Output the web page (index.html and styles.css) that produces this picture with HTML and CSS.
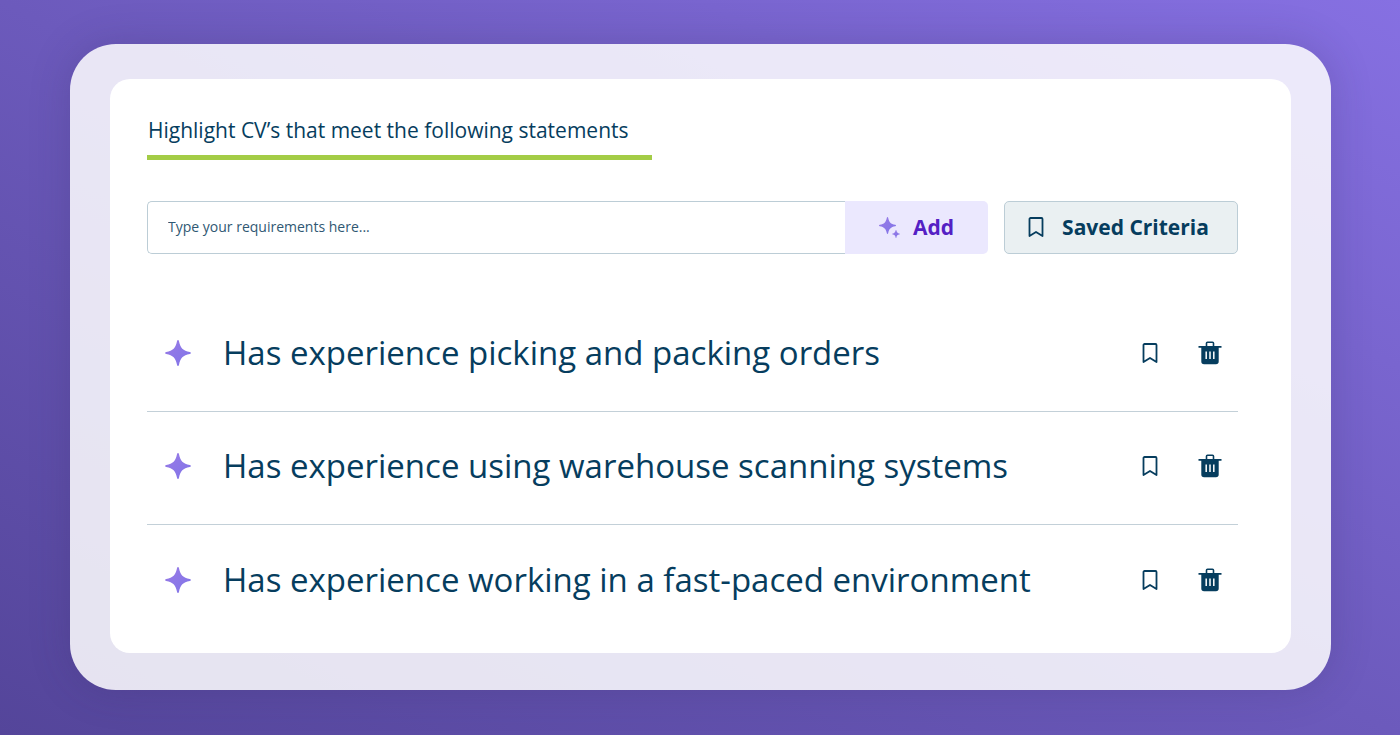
FILE: index.html
```
<!DOCTYPE html>
<html lang="en">
<head>
  <meta charset="UTF-8" />
  <meta name="viewport" content="width=device-width, initial-scale=1.0"/>
  <title>Highlight CVs</title>
  <link rel="stylesheet" href="styles.css">
</head>
<body>
  <!-- shared icons -->
  <svg class="sprite" aria-hidden="true">
    <linearGradient id="violet" x1="0" y1="0" x2="1" y2="1">
      <stop offset="0" stop-color="#9a7be6"/>
      <stop offset="1" stop-color="#7f74e8"/>
    </linearGradient>
    <symbol id="star" viewBox="0 0 26 26">
      <path fill="url(#violet)" d="M13 0c.5 0 .8.4 1 1.200C15.300 8 18 10.700 24.800 12c.8.2 1.200.5 1.200 1s-.4.800-1.200 1C18 15.300 15.300 18 14 24.800c-.2.800-.5 1.200-1 1.200s-.8-.4-1-1.200C10.700 18 8 15.300 1.200 14 .4 13.800 0 13.500 0 13s.4-.8 1.200-1C8 10.700 10.700 8 12 1.200c.2-.8.500-1.200 1-1.200z"/>
    </symbol>
    <symbol id="bookmark" viewBox="0 0 16 20">
      <path fill="none" stroke="currentColor" stroke-width="1.800" stroke-linejoin="round" d="M2.500 1h11a1 1 0 0 1 1 1V19L8 15 1.500 19V2a1 1 0 0 1 1-1z"/>
    </symbol>
    <symbol id="trash" viewBox="0 0 24 24">
      <path fill="none" stroke="currentColor" stroke-width="1.600" d="M8.500 5.500V2.300q0-1 1-1h5q1 0 1 1v3.200"/>
      <path fill="currentColor" d="M.5 5h23v1.800h-2.800V20.500a2.800 2.800 0 0 1-2.800 2.800H6.100a2.800 2.800 0 0 1-2.800-2.800V6.800H.5z"/>
      <path stroke="#fff" stroke-width="1.500" d="M8.200 10.500v7.500M12 10.500v7.500M15.800 10.500v7.500"/>
    </symbol>
  </svg>

  <main class="frame">
    <div class="card">
      <h1 class="title"><label for="requirement">Highlight CV’s that meet the following statements</label></h1>

      <form class="toolbar">
        <div class="entry">
          <input id="requirement" type="text" placeholder="Type your requirements here...">
          <button class="add" type="button">
            <svg class="sparkles" viewBox="0 0 22 22" aria-hidden="true">
              <use href="#star" x="0" y="1" width="17" height="17"/>
              <use href="#star" x="13" y="14" width="8" height="8"/>
            </svg>
            Add
          </button>
        </div>
        <button class="saved" type="button">
          <svg class="bookmark" aria-hidden="true"><use href="#bookmark"/></svg>
          Saved Criteria
        </button>
      </form>

      <ul class="criteria">
        <li>
          <svg class="star" aria-hidden="true"><use href="#star"/></svg>
          <span class="text">Has experience picking and packing orders</span>
          <button class="icon" type="button" aria-label="Save"><svg class="bookmark" aria-hidden="true"><use href="#bookmark"/></svg></button>
          <button class="icon" type="button" aria-label="Delete"><svg class="trash" aria-hidden="true"><use href="#trash"/></svg></button>
        </li>
        <li>
          <svg class="star" aria-hidden="true"><use href="#star"/></svg>
          <span class="text">Has experience using warehouse scanning systems</span>
          <button class="icon" type="button" aria-label="Save"><svg class="bookmark" aria-hidden="true"><use href="#bookmark"/></svg></button>
          <button class="icon" type="button" aria-label="Delete"><svg class="trash" aria-hidden="true"><use href="#trash"/></svg></button>
        </li>
        <li>
          <svg class="star" aria-hidden="true"><use href="#star"/></svg>
          <span class="text">Has experience working in a fast-paced environment</span>
          <button class="icon" type="button" aria-label="Save"><svg class="bookmark" aria-hidden="true"><use href="#bookmark"/></svg></button>
          <button class="icon" type="button" aria-label="Delete"><svg class="trash" aria-hidden="true"><use href="#trash"/></svg></button>
        </li>
      </ul>
    </div>
  </main>
</body>
</html>
```

FILE: styles.css
```
* { box-sizing:border-box; }
body { font-family:"Open Sans", sans-serif; margin:0; min-height:100vh; padding:44px 69px 44px 70px; color:#063d5e; background:linear-gradient(to top right, #54459a, #6c5abc 50%, #8670e2); }
button, input { font:inherit; color:inherit; }
button { cursor:pointer; }
svg { display:block; flex:none; }
.sprite { position:absolute; width:0; height:0; }

.frame { padding:35px 40px 37px; border-radius:46px; background:rgba(255,255,255,.85); box-shadow:0 0 40px rgba(50,40,90,.22); }
.card { padding:36px 53px 15px 37px; border-radius:20px; background:#fff; }
.title { display:inline-block; margin:0; padding:0 23px 10px 1px; border-bottom:5px solid #a3cc46; font-size:21px; line-height:30px; font-weight:500; vertical-align:top; }

.toolbar { display:flex; gap:16px; margin-top:41px; height:53px; }
.entry { flex:1; display:flex; min-width:0; }
.entry input { flex:1; min-width:0; padding:0 20px 2px; border:1px solid #bccdd6; border-right:0; border-radius:5px 0 0 5px; background:#fff; font-size:14px; outline:none; }
.entry input::placeholder { color:#2f5873; opacity:1; }
.add, .saved { display:flex; align-items:center; justify-content:center; padding:0 0 2px; font-size:21px; font-weight:700; }
.add { width:143px; gap:12px; border:0; border-radius:0 5px 5px 0; background:#ebe8fe; color:#5420c4; }
.sparkles { width:22px; height:22px; }
.saved { width:234px; gap:18px; padding-right:5px; border:1px solid #bccdd6; border-radius:5px; background:#eaf0f2; }

.criteria { list-style:none; margin:45px 0 0; padding:0; }
.criteria li { display:flex; align-items:center; height:113px; padding:0 16px 4px 18px; border-bottom:1px solid #c3d0d8; }
.criteria li:last-child { border-bottom:0; }
.star { width:26px; height:26px; }
.text { flex:1; margin-left:32px; font-size:33px; line-height:46px; }
.icon { padding:0; border:0; background:none; margin-left:40px; }
.bookmark { width:16px; height:20px; }
.trash { width:24px; height:24px; }
```
